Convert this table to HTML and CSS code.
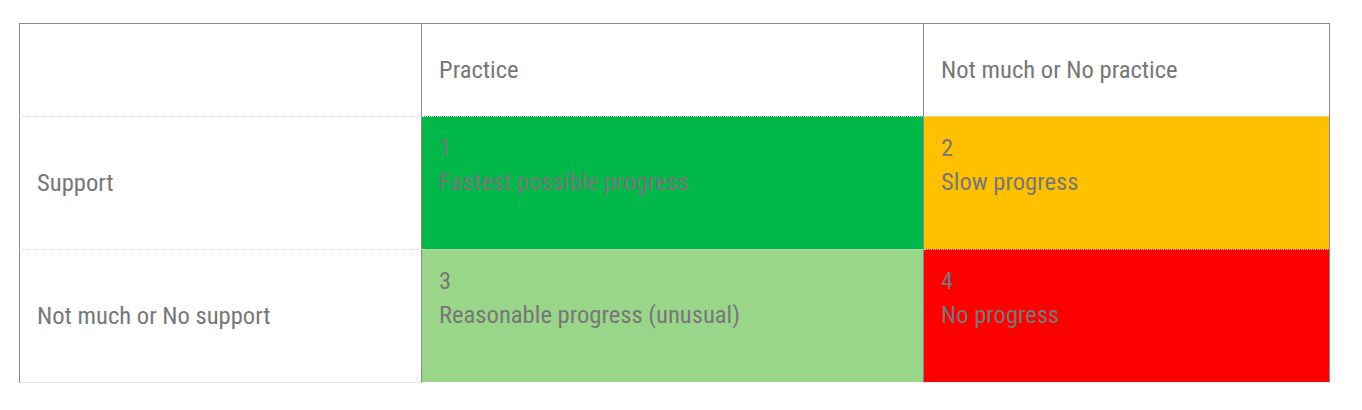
FILE: index.html
```html
<!DOCTYPE html>
<html>
<head>
<meta charset="utf-8">
<title>Support / Practice matrix</title>
<link rel="stylesheet" href="styles.css">
</head>
<body>
<div class="matrix">
  <div class="cell head label first"></div>
  <div class="cell head label">Practice</div>
  <div class="cell head label">Not much or No practice</div>

  <div class="cell row label first">Support</div>
  <div class="cell row box green">1<br>Fastest possible progress</div>
  <div class="cell row box amber">2<br>Slow progress</div>

  <div class="cell row last label first">Not much or No support</div>
  <div class="cell row last box lime">3<br>Reasonable progress (unusual)</div>
  <div class="cell row last box red">4<br>No progress</div>
</div>
</body>
</html>
```
FILE: styles.css
```css
html, body {
  margin: 0;
  background: #fff;
}

body {
  padding: 23px 0 0 19px;
  font-family: "Roboto Condensed", Roboto, "Liberation Sans", sans-serif;
  font-size: 24.6px;
  line-height: 34px;
  color: #777;
}

.matrix {
  display: grid;
  width: 1311px;
  grid-template-columns: 403px 502px 406px;
  grid-template-rows: 93px 133px 134px;
}

.cell {
  box-sizing: border-box;
  padding-left: 17px;
  border-right: 1px solid #888;
}

.cell.first {
  border-left: 1px solid #888;
}

.head {
  border-top: 1px solid #888;
}

.row {
  border-top: 1px dotted #dcdcdc;
}

.row.last {
  border-bottom: 1px solid #fff;
}

.row.last.first {
  border-bottom-color: #e6e6e6;
}

.label {
  display: flex;
  flex-direction: column;
  justify-content: center;
}

.box {
  padding-top: 14px;
}

.green { background: #00b84a; }
.amber { background: #ffc000; }
.lime  { background: #9ad68a; }
.red   { background: #ff0000; }
```
